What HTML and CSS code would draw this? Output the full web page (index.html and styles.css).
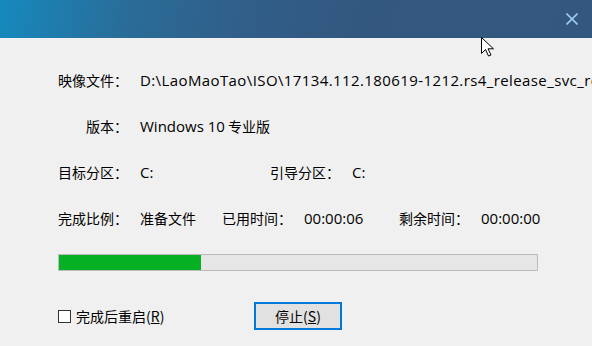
FILE: index.html
```html
<!DOCTYPE html>
<html lang="zh-CN">
<head>
<meta charset="utf-8">
<title>安装</title>
<link rel="stylesheet" href="styles.css">
</head>
<body>
<div class="window">
  <header class="titlebar">
    <svg class="close" width="12" height="12" viewBox="0 0 12 12"><path d="M0.5 0.5L11.5 11.5M11.5 0.5L0.5 11.5" stroke="#9ccbf0" stroke-width="1.6" fill="none"/></svg>
  </header>
  <main class="content">
    <div class="row">
      <span class="label">映像文件：</span>
      <span class="value latin path">D:\LaoMaoTao\ISO\17134.112.180619-1212.rs4_release_svc_refresh_CLIENTCONSUMER_RET_x64FRE_zh-cn.esd</span>
    </div>
    <div class="row">
      <span class="label">版本：</span>
      <span class="value"><span class="latin">Windows 10</span> 专业版</span>
    </div>
    <div class="row">
      <div class="field f-target">
        <span class="label">目标分区：</span>
        <span class="value latin">C:</span>
      </div>
      <div class="field">
        <span class="label">引导分区：</span>
        <span class="value latin">C:</span>
      </div>
    </div>
    <div class="row">
      <div class="field f-ratio">
        <span class="label">完成比例：</span>
        <span class="value">准备文件</span>
      </div>
      <div class="field f-used">
        <span class="label">已用时间：</span>
        <span class="value latin">00:00:06</span>
      </div>
      <div class="field">
        <span class="label">剩余时间：</span>
        <span class="value latin">00:00:00</span>
      </div>
    </div>
    <div class="progress"><div class="fill" style="width:142px"></div></div>
    <div class="actions">
      <label class="check"><span class="box"></span>完成后重启(<u>R</u>)</label>
      <button class="btn">停止(<u>S</u>)</button>
    </div>
  </main>
  <svg class="cursor" width="13" height="20" viewBox="0 0 13 20"><path d="M0.5 0.5V16.5L4.5 12.5L7.5 19L10 18L7 11.8H12.5Z" fill="#fff" stroke="#000" stroke-width="1" stroke-linejoin="miter"/></svg>
</div>
</body>
</html>
```
FILE: styles.css
```css
html, body {
  margin: 0;
  padding: 0;
}
body {
  background: #f0f0f0;
  font-family: "Microsoft YaHei", "Noto Sans CJK SC", sans-serif;
  font-size: 14px;
  color: #000;
  overflow: hidden;
}
.window {
  position: relative;
  width: 592px;
  height: 346px;
  overflow: hidden;
}
.titlebar {
  height: 38px;
  background: linear-gradient(100deg, #1689bd 0%, #2a6c98 22%, #305f8a 40%, #33587f 60%, #34577f 100%);
  display: flex;
  justify-content: flex-end;
  align-items: center;
  padding-right: 14px;
}
.close {
  display: block;
}
.content {
  padding: 32px 0 0 58px;
}
.row {
  display: flex;
  height: 20px;
  line-height: 20px;
  margin-bottom: 26px;
  white-space: nowrap;
}
.field {
  display: flex;
}
.label {
  width: 70px;
  text-align: right;
  flex: none;
}
.value {
  margin-left: 12px;
}
.latin {
  font-family: "Open Sans", "Noto Sans CJK SC", sans-serif;
  font-size: 15px;
}
.path {
  letter-spacing: 0.4px;
}
.f-target { width: 212px; }
.f-ratio { width: 164px; }
.f-used { width: 177px; }
.progress {
  width: 478px;
  height: 15px;
  border: 1px solid #bcbcbc;
  background: #e6e6e6;
}
.fill {
  height: 100%;
  background: #06b025;
}
.actions {
  display: flex;
  align-items: center;
  margin-top: 31px;
}
.check {
  display: flex;
  align-items: center;
  width: 196px;
  line-height: 20px;
}
.box {
  width: 11px;
  height: 11px;
  border: 1px solid #333;
  background: #fff;
  margin-right: 5px;
}
.btn {
  width: 88px;
  height: 28px;
  border: 2px solid #0078d7;
  background: #e1e1e1;
  font: inherit;
  color: #000;
  padding: 0;
  line-height: 22px;
}
.cursor {
  position: absolute;
  left: 481px;
  top: 37px;
}
```
